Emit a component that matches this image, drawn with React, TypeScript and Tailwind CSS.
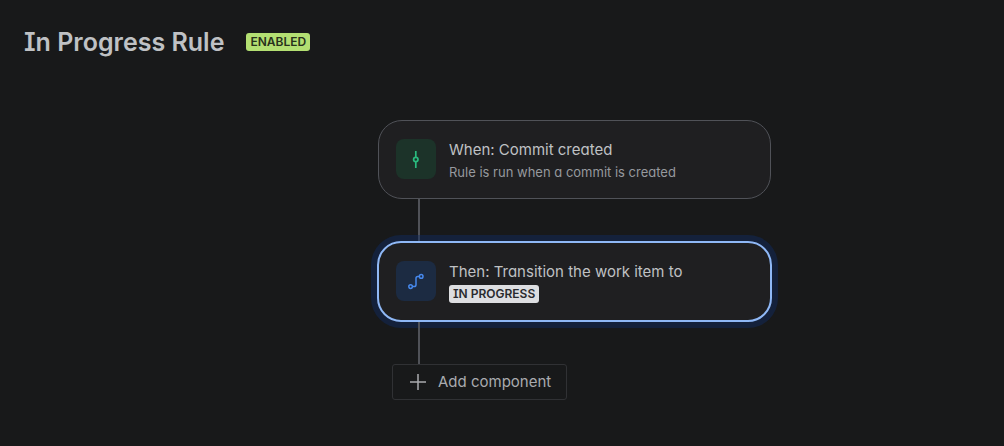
import type { ReactNode } from 'react';

function Connector() {
  return <div aria-hidden="true" className="ml-[41px] h-[42px] w-0.5 bg-[#505258]" />;
}

function CommitIcon() {
  return (
    <svg width="20" height="20" viewBox="0 0 20 20" fill="none" stroke="#2abb7f" aria-hidden="true">
      <circle cx="9.8" cy="10.5" r="2.2" strokeWidth="1.7" />
      <path d="M9.8 2V8M9.8 13V19" strokeWidth="1.7" />
    </svg>
  );
}

function TransitionIcon() {
  return (
    <svg width="20" height="20" viewBox="0 0 20 20" fill="none" stroke="#4688ec" strokeWidth="1.5" aria-hidden="true">
      <circle cx="4.6" cy="15.6" r="1.8" />
      <circle cx="15.2" cy="5.4" r="1.8" />
      <path d="M6.6 15.6H8.2Q10 15.6 10 13.8V7.2Q10 5.4 11.8 5.4H13.2" />
    </svg>
  );
}

type StepProps = { icon: ReactNode; tile: string; frame: string; title: string; children: ReactNode };

function Step({ icon, tile, frame, title, children }: StepProps) {
  return (
    <section className={`flex items-center rounded-[24px] bg-[#1f1f21] px-[17px] pt-4 pb-[17px] ${frame}`}>
      <div className={`flex h-10 w-10 shrink-0 items-center justify-center rounded-lg ${tile}`}>{icon}</div>
      <div className="ml-[13px]">
        <h2 className="text-[15px] leading-[26px] text-[#bfc1c4]">{title}</h2>
        {children}
      </div>
    </section>
  );
}

export default function App() {
  return (
    <div className="min-h-screen bg-[#18191a] font-['Inter',sans-serif] text-[#bfc1c4] [font-feature-settings:'cv08','cv11']">
      <header className="flex items-center gap-[22px] px-6 pt-6">
        <h1 className="text-[25px] leading-9 font-semibold">In Progress Rule</h1>
        <span className="rounded-[3px] bg-[#b3df72] px-1 text-xs leading-[18px] font-semibold text-[#28311b]">ENABLED</span>
      </header>
      <main className="flex justify-center pt-[60px] pb-10 pl-[145px]">
        <div className="w-full max-w-[395px]">
          <Step
            icon={<CommitIcon />}
            tile="bg-[#1c3329]"
            frame="mx-px border border-[#505258]"
            title="When: Commit created"
          >
            <p className="text-[13px] leading-[18px] text-[#96999e]">Rule is run when a commit is created</p>
          </Step>
          <Connector />
          <Step
            icon={<TransitionIcon />}
            tile="bg-[#1c2b42]"
            frame="border-2 border-[#8fb8f6] shadow-[0_0_0_6px_rgba(15,45,99,0.45)]"
            title="Then: Transition the work item to"
          >
            <div className="flex">
              <span className="rounded-[3px] bg-[#dddee1] px-1 text-xs leading-[18px] font-semibold text-[#292a2e]">IN PROGRESS</span>
            </div>
          </Step>
          <Connector />
          <button
            type="button"
            className="ml-[15px] flex h-9 items-center gap-[7px] rounded-[3px] border border-[#303134] pr-[15px] pl-3 text-[15px] text-[#a9abaf]"
          >
            <svg width="26" height="26" viewBox="0 0 26 26" fill="none" stroke="currentColor" strokeWidth="1.5" aria-hidden="true">
              <path d="M13 5V21M5 13H21" />
            </svg>
            Add component
          </button>
        </div>
      </main>
    </div>
  );
}
